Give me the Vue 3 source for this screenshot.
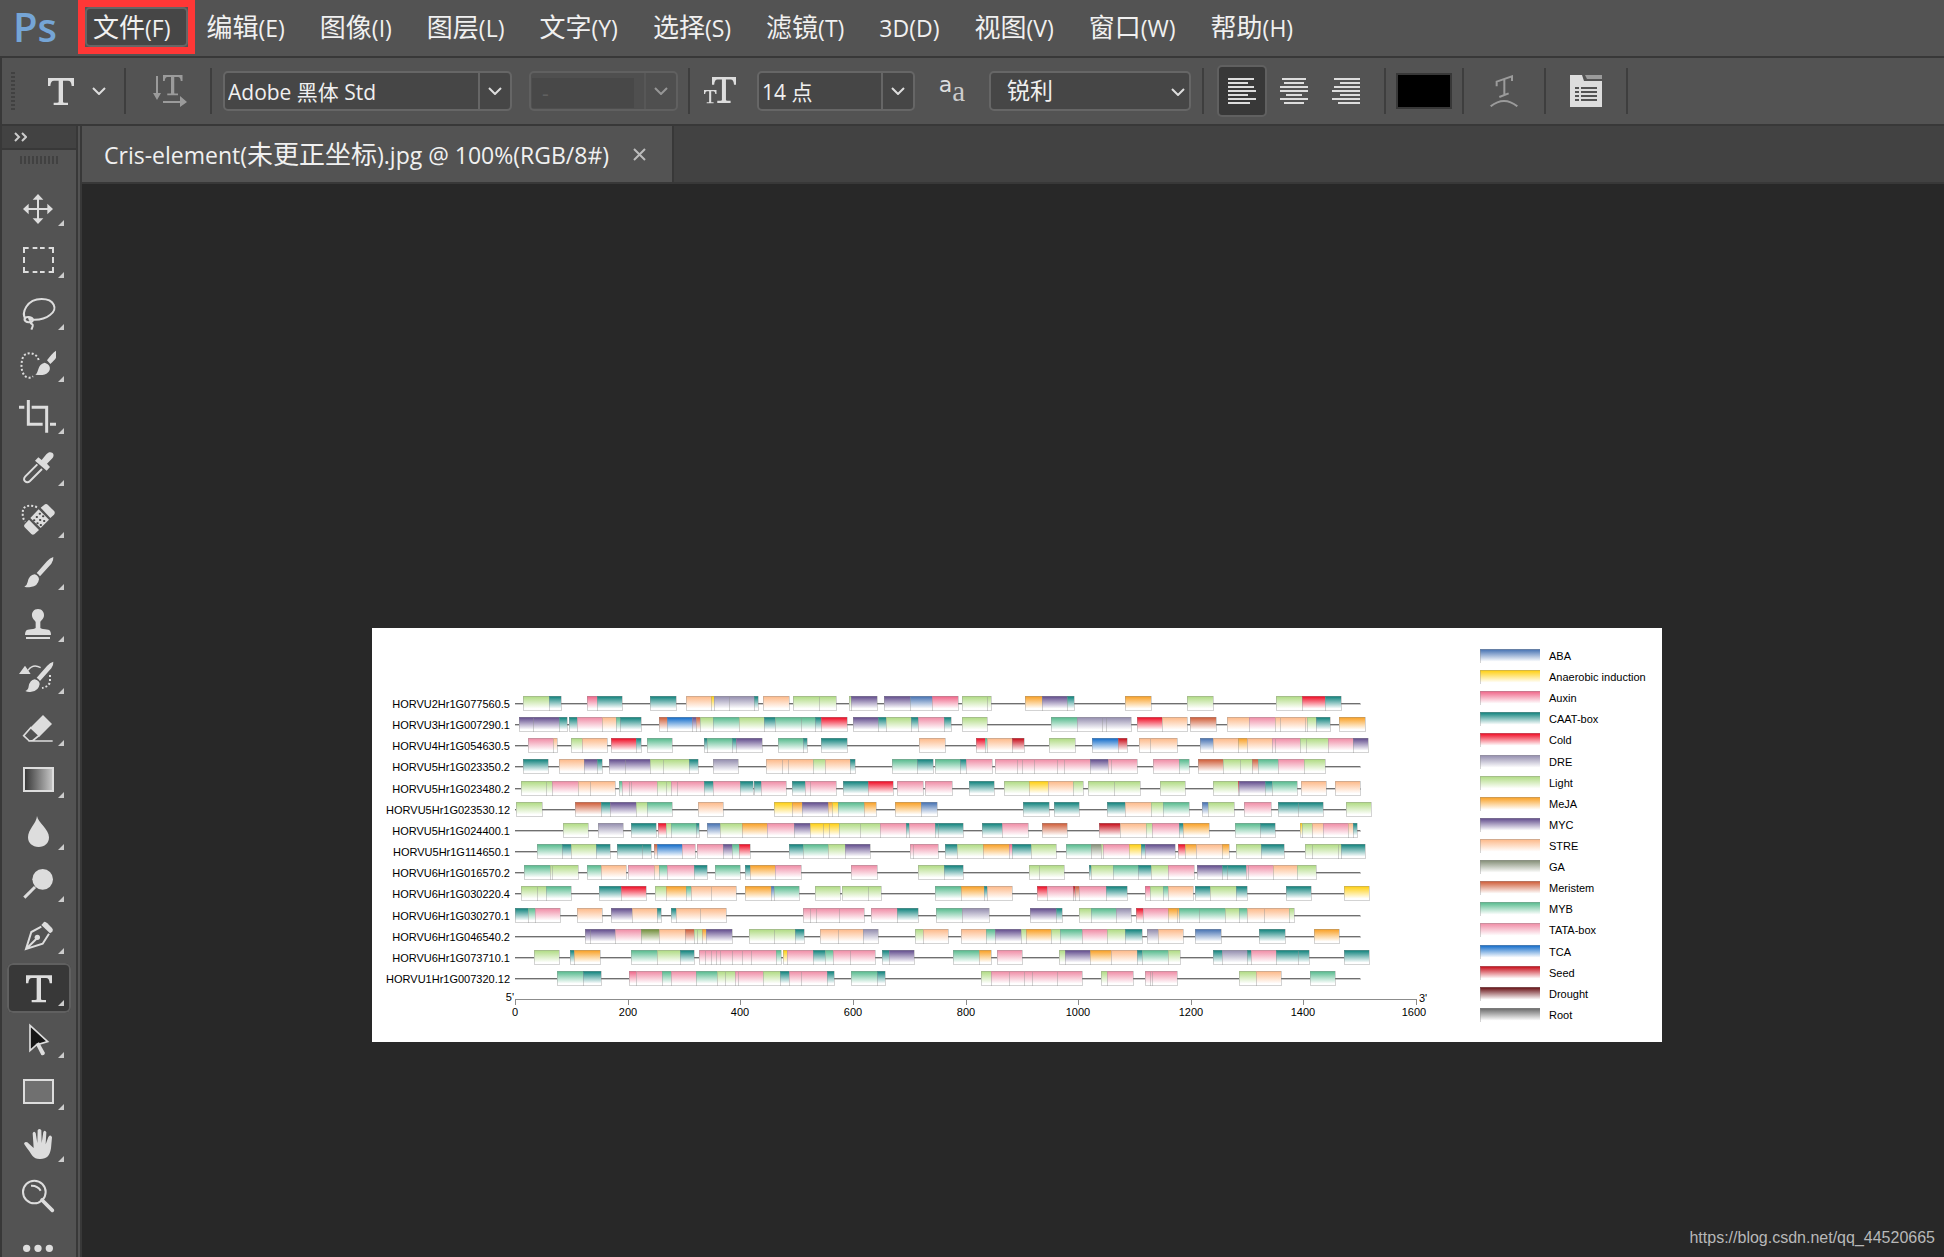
<script setup>
const menus = [
  { name: '文件', key: '(F)', open: true },
  { name: '编辑', key: '(E)' },
  { name: '图像', key: '(I)' },
  { name: '图层', key: '(L)' },
  { name: '文字', key: '(Y)' },
  { name: '选择', key: '(S)' },
  { name: '滤镜', key: '(T)' },
  { name: '', key: '3D(D)' },
  { name: '视图', key: '(V)' },
  { name: '窗口', key: '(W)' },
  { name: '帮助', key: '(H)' },
]

const aligns = [
  { label: '左对齐', anchor: 0, active: true, widths: [26, 20, 26, 28, 20, 28, 22] },
  { label: '居中对齐', anchor: 0.5, widths: [24, 20, 28, 28, 16, 28, 20] },
  { label: '右对齐', anchor: 1, widths: [26, 20, 26, 28, 20, 28, 22] },
]

const serifT = 'M78 37H156V61H149Q148 45 138 45H123V109Q123 111 128 111H138V118H95V111H105Q110 111 110 109V45H96Q86 45 85 61H78Z'

const brush = 'M160 30Q150 33 141 43L110 78Q116 82 120 88L154 50Q161 40 160 30Z M104 82Q116 86 117 97Q114 118 92 120Q82 122 73 119Q81 116 83 105Q87 84 104 82Z'

// f: filled outlines, s: stroked outlines, d: dotted outlines
const tools = [
  { name: '移动工具', f: 'M114 33L130 50H98ZM114 123L130 106H98ZM69 78L86 62V94ZM159 78L142 62V94Z', s: 'M114 45V111M80 78H148' },
  { name: '矩形选框工具', s: 'M72 54V39H86M98 39H112M120 39H134M146 39H159V54M159 66V84M159 96V111H146M134 111H120M112 111H98M86 111H72V96M72 84V66' },
  { name: '套索工具', s: 'M77 97C63 78 80 36 125 36C163 36 175 66 150 84C134 97 110 100 86 97M73 96C76 87 98 88 99 99C97 109 75 108 73 96M86 92C94 99 85 106 98 113C100 117 97 121 94 128' },
  { name: '快速选择工具', f: 'M168 35Q156 43 141 64L151 75Q165 62 168 56ZM134 71C149 75 154 88 146 98C136 110 120 108 106 107C117 101 111 76 134 71Z', d: 'M116 63C108 37 76 38 69 54C62 73 63 96 73 109C80 118 92 118 99 112' },
  { name: '裁剪工具', s: 'M57 49H73M85 27V100H128M95 49H140V125M150 100H168', w: 9 },
  { name: '吸管工具', f: 'M105 53L115 43L125 51L139 34C150 20 169 31 157 46L141 62L150 72L140 83Z', s: 'M112 64L76 100C65 112 80 123 90 114L126 78' },
  { name: '污点修复画笔工具', f: 'M122 38L135 28Q140 26 144 30L163 49Q166 54 162 59L151 69ZM116 43L147 74L122 99L91 69ZM87 74L117 105L103 118Q98 121 94 117L74 97Q70 92 75 87Z', k: 'M119 56h1M129 64h1M110 66h1M120 75h1M132 78h1M102 76h1M112 85h1M122 90h1', d: 'M111 37C94 29 75 31 69 43C68 55 66 70 76 80' },
  { name: '画笔工具', f: brush },
  { name: '仿制图章工具', f: 'M114 30C127 30 133 41 132 50C131 61 121 64 121 70V87Q124 90 145 92Q153 94 153 108H75Q75 94 83 92Q104 90 107 87V70C107 64 97 61 96 50C95 41 101 30 114 30ZM78 114H150V120H78Z' },
  { name: '历史记录画笔工具', f: 'M160 32Q150 35 141 45L110 80Q116 84 120 90L154 52Q161 42 160 32ZM104 85Q118 88 119 99Q116 120 94 122Q84 124 76 120Q85 117 86 106Q89 88 104 85ZM75 44L92 69H57Z', s: 'M84 58Q99 37 122 50', d: 'M150 72V94Q144 108 126 111', w: 4 },
  { name: '橡皮擦工具', f: 'M129 36L156 63L118 101L90 75Z', s: 'M94 72L71 98L88 114L98 113L119 96M85 114H158', w: 5 },
  { name: '渐变工具', box: 'url(#tool-ramp)' },
  { name: '模糊工具', f: 'M111 27C114 47 147 66 147 91C147 109 134 120 116 120C97 120 84 108 84 91C84 67 110 48 111 27Z' },
  { name: '减淡工具', f: 'M159 61A31 31 0 1 1 97 61A31 31 0 1 1 159 61Z', s: 'M105 84L73 116', w: 9 },
  { name: '钢笔工具', f: 'M124 42L132 33Q136 31 142 37L156 51Q161 56 157 62L150 67Z', s: 'M124 47L94 63L78 114L128 98L147 68M79 113L111 82', dot: [112, 79, 8] },
  { name: '横排文字工具', f: serifT, active: true },
  { name: '路径选择工具', f: 'M107 87L117 82L135 114Q133 123 124 120Z', cursor: true },
  { name: '矩形工具', box: '#707070' },
  { name: '抓手工具', f: 'M72 74Q74 66 82 70L101 87L98 43Q101 34 107 42L112 72L113 34Q118 26 124 34L125 72L130 39Q135 31 139 40L137 76L145 54Q152 45 156 55L153 88C149 112 141 119 121 120C99 121 95 107 88 97Q82 89 72 74Z' },
  { name: '缩放工具', s: 'M137 63A34 34 0 1 1 69 63A34 34 0 1 1 137 63M93 44Q113 43 122 59', handle: 'M126 87L157 118', single: true },
  { name: '编辑工具栏', f: 'M91 76A11 11 0 1 1 69 76A11 11 0 1 1 91 76ZM125 76A11 11 0 1 1 103 76A11 11 0 1 1 125 76ZM159 76A11 11 0 1 1 137 76A11 11 0 1 1 159 76Z', single: true },
]

const elements = [
  { id: 'A', name: 'ABA', color: '#4a75b4' },
  { id: 'N', name: 'Anaerobic induction', color: '#ffd015' },
  { id: 'X', name: 'Auxin', color: '#f06a8c' },
  { id: 'C', name: 'CAAT-box', color: '#14857f' },
  { id: 'K', name: 'Cold', color: '#f01028' },
  { id: 'D', name: 'DRE', color: '#9690b0' },
  { id: 'L', name: 'Light', color: '#b2dc86' },
  { id: 'J', name: 'MeJA', color: '#f9a229' },
  { id: 'Y', name: 'MYC', color: '#65508f' },
  { id: 'S', name: 'STRE', color: '#fdbb8c' },
  { id: 'G', name: 'GA', color: '#87917a' },
  { id: 'R', name: 'Meristem', color: '#d0603c' },
  { id: 'B', name: 'MYB', color: '#5abc90' },
  { id: 'T', name: 'TATA-box', color: '#f08fa8' },
  { id: 'W', name: 'TCA', color: '#176fcb' },
  { id: 'E', name: 'Seed', color: '#c8101c' },
  { id: 'O', name: 'Drought', color: '#6a1418' },
  { id: 'Q', name: 'Root', color: '#6c6c6c' },
]
const fills = [...elements, { id: 'V', color: '#75903f' }]

// Each track lists positions and the element that starts there; "_" is a gap.
const tracks = [
  ['HORVU2Hr1G077560.5', '24L102C139_216X247C322_406C483_513S589N598D642D717C729_744S821_835L912L964_1003L1009Y1087_1107Y1184A1252X1330_1341L1416L1429_1530J1581Y1657C1677_1830J1909_2017L2095_2283L2360K2431C2479_'],
  ['HORVU3Hr1G007290.1', '12Y54Y132C157_162C186T261S303B316C379_433R455W531Y543R555L594B672L747C781B858B900C919K996_1014Y1089C1113L1189C1210T1287C1309_1341L1417_1608B1685D1761D1773D1849_1867K1941S2017_2026R2103_2136S2201T2280S2295S2370S2376L2402C2446_2472J2551_'],
  ['HORVU4Hr1G054630.5', '39T115S127_168L201S277_288K364C378_396B472_567C576B651C663Y742_788B864C877_919C996_1213S1290_1382K1411B1416S1491E1527_1603L1680_1731W1809E1836_1872S1905S1986_2055A2094S2169J2196S2271T2280T2355L2373L2439T2514Y2560_'],
  ['HORVU5Hr1G023350.2', '24C100_132S207Y246C261_282Y331Y406L445L522C549_594D670_754S801S819S895L930S1006C1021_1131B1206C1253_1260B1335C1354T1431_1439T1507T1521T1556T1625T1648T1725Y1780T1788T1867_1915T1992B2023_2049R2125L2175L2210R2229B2289T2367L2431_'],
  ['HORVU5Hr1G023480.2', '18L94L111T189S225S301_313B321T342T348T426L453L468T487T567C595T675C714_717C738T814_830C870T885T964_984C1059K1135_1146T1224_1231T1312_1362C1438_1467L1543N1599S1675L1704_1720L1797L1876_1935L2011_2094L2169K2172Y2250C2271B2347_2358S2434_2460S2536_'],
  ['HORVU5Hr1G023530.12', '3L82_180R258C285Y363L396B472_549S625_777N831J862Y939J951N969B1047J1084_1140J1218A1267_1525C1603_1617C1693_1776C1831S1908L1944B2023_2061A2079L2157_2187T2268_2289C2350C2425_2493L2569_'],
  ['HORVU5Hr1G024400.1', '144L220_249D325_348C424_428K453L468B544C553_576A615L681J757T838Y885N925N942N972L1035L1096T1173C1182T1260C1269C1345_1401C1462T1540_1581R1657_1752E1816S1893L1912T1993C2004J2083_2160B2235C2280_2355N2361L2391S2424T2500S2515C2527_'],
  ['HORVU5Hr1G114650.1', '66B141C168L244C285_306C381C409_417R426W502T540_545T624Y650B672K706_822C864B940L990Y1066_1185T1195T1269_1290C1326L1404J1483X1490C1549L1624_1653B1728G1759L1765T1842N1878C1889Y1981_1989K2010J2043S2121J2143_2163L2238C2308_2370L2391L2470L2477C2551_'],
  ['HORVU6Hr1G016570.2', '27B105L111L189_216B258S334_340T417S432B456T537C577_600B676_691C705J781T859_1009T1087_1210L1287C1345_1542L1572L1648_1723C1728L1794B1869C1908L1959T2038_2046Y2121C2136C2192T2199T2274S2346L2404_'],
  ['HORVU6Hr1G030220.4', '18L66L93B169_253C318K394_420L453J513B528S588S664_690J768A776B853_900L976_982L1059L1099_1260B1338J1407C1416S1492_1565K1597T1675E1681R1692T1773C1837_1890X1906L1944B1959S2035_2041C2084L2163C2196_2313C2389_2487N2563_'],
  ['HORVU6Hr1G030270.1', '0C39B61T136_186S262_288Y351S427C439_469C483S555S633_864T885T904T972T1048_1069T1146C1210_1264B1341D1423_1546Y1623C1642_1692L1728B1804D1848_1864K1884T1959J1987J1992B2052B2131L2172B2196S2247S2323L2338_'],
  ['HORVU6Hr1G046540.2', '210Y225Y301T378V433S510R538L546L561J573Y650_702L777L840C868_915S969S1044D1089_1201L1224S1300_1338S1414B1441Y1518L1533J1609L1635B1701T1777L1830C1881_1896D1929S2005_2041A2119_2232C2311_2397J2473_'],
  ['HORVU6Hr1G073710.1', '57L133_165C177J255_348B426L495C538_553T571T588T604T616T651T681T708T783B799_805N817T895C931B954T1005T1081_1101C1122Y1198_1314B1392J1429_1446T1522_1633L1649Y1725J1789S1866C1882B1959L1996_2094C2121D2196C2208T2284C2350C2383_2487C2563_'],
  ['HORVU1Hr1G007320.12', '126B204C259_343X364T441B468T543B607L630L660T670T745L795C822T858T936C958_1009B1086C1111_1399L1429T1482T1527T1552T1625T1702_1758L1776T1854_1890T1906T1911T1987_2172L2223S2299_2385B2461_'],
].map(([name, code], row) => {
  const marks = [...code.matchAll(/(\d+)([A-Z_])/g)].map((m) => [Math.round(m[1] / 3), m[2]])
  const blocks = marks
    .slice(0, -1)
    .map(([x, id], i) => ({ x, id, w: marks[i + 1][0] - x }))
    .filter((b) => b.id !== '_')
  return { name, blocks, y: 68 + Math.round((row * 275) / 13) }
})

const ticks = [0, 200, 400, 600, 800, 1000, 1200, 1400, 1600].map((bp) => ({
  bp,
  x: Math.round((bp * 901) / 1600),
}))
</script>

<template>
  <div class="app">
    <nav class="menubar">
      <span class="logo">Ps</span>
      <div v-for="m in menus" :key="m.key" class="menu-item">
        <button type="button" :class="{ open: m.open }"><span class="cn">{{ m.name }}</span>{{ m.key }}</button>
        <span v-if="m.open" class="highlight"></span>
      </div>
    </nav>

    <div class="options">
      <span class="grip-v"></span>
      <button type="button" class="preset" aria-label="文字工具预设">
        <svg width="26" height="27" viewBox="78 37 78 81"><path :d="serifT" fill="#ddd" /></svg>
        <svg width="14" height="8" viewBox="0 0 14 8"><path d="M1 1L7 7L13 1" class="chev" /></svg>
      </button>
      <span class="sep"></span>
      <button type="button" class="orient" aria-label="切换文本取向">
        <svg width="36" height="32" viewBox="0 0 36 32" fill="#9b9b9b">
          <path d="M4 1H6V18H9L5 25L1 18H4ZM11 26H28V21L35 27L28 32V28H11Z" />
          <path transform="translate(11 0) scale(.25 .25) translate(-78 -37)" :d="serifT" />
        </svg>
      </button>
      <span class="sep"></span>
      <div class="combo font">
        <input type="text" aria-label="字体" value="Adobe 黑体 Std" />
        <button type="button" aria-label="字体列表"><svg width="14" height="8" viewBox="0 0 14 8"><path d="M1 1L7 7L13 1" class="chev" /></svg></button>
      </div>
      <div class="combo style">
        <input type="text" aria-label="字体样式" value="-" disabled />
        <button type="button" aria-label="样式列表" disabled><svg width="14" height="8" viewBox="0 0 14 8"><path d="M1 1L7 7L13 1" class="chev" /></svg></button>
      </div>
      <span class="sep"></span>
      <label for="size" class="size-icon" aria-label="字体大小">
        <svg width="32" height="27" viewBox="0 0 32 27" fill="#ddd">
          <path transform="translate(8 0) scale(.31 .32) translate(-78 -37)" :d="serifT" />
          <path transform="translate(0 13) scale(.16 .165) translate(-78 -37)" :d="serifT" />
        </svg>
      </label>
      <div class="combo size">
        <input id="size" type="text" value="14 点" />
        <button type="button" aria-label="大小列表"><svg width="14" height="8" viewBox="0 0 14 8"><path d="M1 1L7 7L13 1" class="chev" /></svg></button>
      </div>
      <label for="aa" class="aa"><b>a</b><span>a</span></label>
      <div class="select-wrap">
        <select id="aa"><option>锐利</option></select>
        <svg width="14" height="8" viewBox="0 0 14 8"><path d="M1 1L7 7L13 1" class="chev" /></svg>
      </div>
      <span class="sep"></span>
      <div class="aligns">
        <button v-for="a in aligns" :key="a.label" type="button" :aria-label="a.label" :class="{ active: a.active }">
          <svg width="28" height="26" viewBox="0 0 28 26" fill="#ddd">
            <rect v-for="(w, i) in a.widths" :key="i" :x="(28 - w) * a.anchor" :y="i * 4" :width="w" height="2" />
          </svg>
        </button>
      </div>
      <span class="sep"></span>
      <button type="button" class="swatch" aria-label="文本颜色"></button>
      <span class="sep"></span>
      <button type="button" class="wide" aria-label="创建文字变形">
        <svg width="28" height="32" viewBox="0 0 84 96" fill="none" stroke="#9b9b9b" stroke-width="6">
          <path d="M20 34V20L66 4V18M43 12V60M28 66L56 55" /><path d="M2 94Q42 62 82 94" />
        </svg>
      </button>
      <span class="sep"></span>
      <button type="button" class="wide" aria-label="切换字符和段落面板">
        <svg width="32" height="32" viewBox="0 0 32 32">
          <path d="M15 0H32V4H17Z" fill="#9b9b9b" /><path d="M0 0H12L14 6H32V32H0Z" fill="#ddd" />
          <path d="M5 13H9M11 13H27M5 17H9M11 17H27M5 21H9M11 21H27M5 25H9M11 25H27" stroke="#535353" stroke-width="2" />
        </svg>
      </button>
      <span class="sep"></span>
    </div>

    <div class="workspace">
      <aside class="toolbar">
        <button type="button" class="expand" aria-label="展开面板">
          <svg width="13" height="10" viewBox="0 0 13 10"><path d="M1 1L5 5L1 9M8 1L12 5L8 9" fill="none" stroke="#ccc" stroke-width="2" /></svg>
        </button>
        <div class="grip-h"></div>
        <button v-for="t in tools" :key="t.name" type="button" class="tool" :class="{ active: t.active }" :aria-label="t.name">
          <svg width="64" height="50" viewBox="21 0 192 150">
            <defs>
              <linearGradient id="tool-ramp"><stop offset="0" stop-color="#333" /><stop offset="1" stop-color="#c8c8c8" /></linearGradient>
            </defs>
            <rect v-if="t.box" x="72" y="39" width="87" height="69" :fill="t.box" stroke="#ddd" stroke-width="6" />
            <path v-if="t.cursor" d="M90 31V107L109 90L143 80Z" fill="#161616" stroke="#ddd" stroke-width="5" />
            <path v-if="t.f" :d="t.f" fill="#ddd" />
            <path v-if="t.s" :d="t.s" fill="none" stroke="#ddd" :stroke-width="t.w || 6" />
            <path v-if="t.d" :d="t.d" fill="none" stroke="#ddd" stroke-width="6" stroke-dasharray="6 6" />
            <path v-if="t.k" :d="t.k" stroke="#484848" stroke-width="6" stroke-linecap="round" />
            <path v-if="t.handle" :d="t.handle" stroke="#ddd" stroke-width="11" stroke-linecap="round" />
            <circle v-if="t.dot" :cx="t.dot[0]" :cy="t.dot[1]" :r="t.dot[2]" fill="#ddd" />
            <path v-if="!t.single" d="M192 111V129H174Z" fill="#ccc" />
          </svg>
        </button>
      </aside>

      <main class="documents">
        <div class="tabs">
          <div class="tab">
            <span>Cris-element(<span class="cn">未更正坐标</span>).jpg @ 100%(RGB/8#)</span>
            <button type="button" aria-label="关闭">
              <svg width="13" height="13" viewBox="0 0 13 13"><path d="M1 1L12 12M12 1L1 12" stroke="#bbb" stroke-width="2" /></svg>
            </button>
          </div>
        </div>
        <div class="canvas">
          <section class="sheet">
            <svg class="plot" width="1107" height="414">
              <defs>
                <linearGradient v-for="f in fills" :id="'el-' + f.id" :key="f.id" x1="0" y1="0" x2="0" y2="1">
                  <stop offset="0.05" :stop-color="f.color" /><stop offset="0.9" stop-color="#fff" />
                </linearGradient>
              </defs>
              <g v-for="t in tracks" :key="t.name" :transform="`translate(143 ${t.y})`">
                <text x="-5" y="12" text-anchor="end">{{ t.name }}</text>
                <rect x="0" y="7" width="845" height="1" class="strand" />
                <g v-for="b in t.blocks" :key="b.x">
                  <rect :x="b.x" y="0" :width="b.w" height="14" fill="#fff" />
                  <rect :x="b.x" y="0" :width="b.w" height="14" :fill="`url(#el-${b.id})`" class="block" />
                </g>
              </g>
              <g transform="translate(143 371)">
                <path class="axis" d="M0 0H901" />
                <g v-for="t in ticks" :key="t.bp">
                  <path class="axis" :d="`M${t.x} 0V6`" />
                  <text :x="t.bp === 1600 ? t.x - 2 : t.x" y="17" text-anchor="middle">{{ t.bp }}</text>
                </g>
                <text x="-1" y="2" text-anchor="end">5'</text>
                <text x="904" y="3">3'</text>
              </g>
            </svg>
            <ul class="legend">
              <li v-for="e in elements" :key="e.id">
                <svg width="61" height="15"><rect x="1" y="1" width="60" height="14" :fill="`url(#el-${e.id})`" class="block" /></svg>
                <span>{{ e.name }}</span>
              </li>
            </ul>
          </section>
          <span class="watermark">https://blog.csdn.net/qq_44520665</span>
        </div>
      </main>
    </div>
  </div>
</template>

<style>
body { background: #282828; }
</style>

<style scoped>
* { box-sizing: border-box; }
.app {
  display: flex; flex-direction: column; height: 100vh; overflow: hidden;
  background: #535353; color: #f0f0f0;
  font-family: "Open Sans", "Noto Sans CJK SC", sans-serif; font-size: 23px; line-height: 32px;
}
button { padding: 0; border: 0; background: none; color: inherit; font: inherit; }
svg { display: block; flex: none; }
.cn { font-size: 26px; }
.chev { fill: none; stroke: #ddd; stroke-width: 2; }

.menubar { display: flex; flex: none; align-items: center; gap: 1px; height: 58px; padding-bottom: 2px; border-bottom: 2px solid #383838; }
.logo { width: 84px; padding-left: 13px; color: #75a5d6; font-size: 40px; font-weight: 600; }
.menu-item { position: relative; }
.menu-item button { height: 40px; padding: 0 15px; border: 2px solid transparent; border-radius: 5px; white-space: nowrap; }
.menu-item button.open { padding: 0 16px 0 6px; background: #464646; border-color: #666; }
.highlight { position: absolute; inset: -7px; border: 7px solid #ff3736; }

.options {
  display: flex; flex: none; align-items: center; height: 68px; padding-left: 9px;
  border-left: 2px solid #383838; border-bottom: 2px solid #383838;
}
.options > * { flex: none; }
.options > button, .size-icon { display: flex; align-items: center; justify-content: center; height: 50px; }
.sep { width: 2px; height: 46px; background: #3e3e3e; }
.grip-v { width: 4px; height: 38px; background: repeating-linear-gradient(#414141 0 2px, transparent 2px 4px); }
.preset { width: 109px; gap: 18px; padding-left: 14px; }
.options .orient { width: 84px; padding-left: 4px; }
.combo { display: flex; height: 40px; border: 2px solid #666; border-radius: 5px; background: #464646; }
.combo input {
  flex: 1; min-width: 0; padding: 0 3px; border: 0; background: none; color: #f0f0f0;
  font-family: inherit; font-size: 21px;
}
.combo button { display: flex; align-items: center; justify-content: center; width: 32px; border-left: 2px solid #666; }
.font { width: 289px; margin-left: 11px; }
.style { width: 149px; margin: 0 10px 0 17px; border-color: #606060; background: #4f4f4f; }
.style input { margin: 5px 10px 1px 1px; padding-left: 10px; background: #484848; color: #606060; }
.style button { border-color: #606060; opacity: 0.5; }
.size-icon { width: 67px; padding: 0 3px 2px 0; justify-content: flex-end; }
.options .size-icon { padding-right: 21px; }
.size { width: 158px; }
.aa { display: flex; align-items: flex-start; justify-content: center; width: 74px; font-family: "Liberation Serif", serif; font-size: 29px; color: #ccc; }
.aa b { font-family: "DejaVu Sans", sans-serif; font-size: 22px; font-weight: 400; line-height: 20px; color: #ddd; }
.select-wrap { position: relative; width: 202px; margin-right: 11px; }
.select-wrap select {
  width: 100%; height: 40px; padding: 0 16px 2px; appearance: none; border: 2px solid #666; border-radius: 5px;
  background: #464646; color: #f0f0f0; font-family: inherit; font-size: 23px;
}
.select-wrap svg { position: absolute; right: 6px; top: 17px; pointer-events: none; }
.aligns { display: flex; gap: 2px; margin: 0 13px; }
.aligns button { display: flex; align-items: center; justify-content: center; width: 50px; height: 52px; border: 2px solid transparent; border-radius: 5px; }
.aligns button.active { background: #383838; border-color: #606060; }
.options .swatch { width: 56px; height: 36px; margin: 0 10px; border: 2px solid #383838; background: #000; }
.wide { width: 80px; }

.workspace { display: flex; flex: 1; min-height: 0; }
.toolbar {
  display: flex; flex: none; flex-direction: column; align-items: center; gap: 2px; width: 78px; overflow: hidden;
  border-left: 2px solid #383838; border-right: 2px solid #383838;
}
.expand { flex: none; align-self: stretch; height: 24px; padding-left: 12px; background: #424242; border-bottom: 2px solid #383838; }
.grip-h { flex: none; width: 38px; height: 8px; margin: 4px 0 17px; background: repeating-linear-gradient(90deg, #414141 0 2px, transparent 2px 4px); }
.tool { flex: none; width: 64px; height: 50px; border-radius: 6px; }
.tool.active { background: #383838; box-shadow: inset 0 0 0 2px #606060; }

.documents { display: flex; flex: 1; flex-direction: column; min-width: 0; margin-left: 2px; border-left: 2px solid #383838; }
.tabs { display: flex; flex: none; height: 58px; background: #424242; border-bottom: 2px solid #383838; }
.tab { display: flex; align-items: center; gap: 24px; padding: 1px 26px 0 22px; background: #535353; border-right: 2px solid #383838; white-space: nowrap; }
.canvas { position: relative; flex: 1; padding: 444px 0 0 8px; background: #282828; }
.sheet { display: flex; width: 1290px; height: 414px; margin: 0 auto; background: #fff; color: #000; font-family: "Liberation Sans", sans-serif; font-size: 11px; line-height: 16px; }
.plot text { fill: #000; }
.strand { fill: #6f6f6f; stroke: #c8c8c8; stroke-width: 1; paint-order: stroke; shape-rendering: crispEdges; }
.block { stroke: #909090; stroke-opacity: 0.4; stroke-width: 1; shape-rendering: crispEdges; }
.axis { fill: none; stroke: #8c8c8c; stroke-width: 1; shape-rendering: crispEdges; }
.legend { display: flex; flex-direction: column; justify-content: space-between; height: 374px; margin: 20px 0 0; padding: 0; list-style: none; }
.legend li { display: flex; gap: 9px; height: 15px; white-space: nowrap; }
.watermark { position: absolute; right: 9px; bottom: 8px; font-family: "Liberation Sans", sans-serif; font-size: 16px; line-height: 22px; color: #b8b8b8; }
</style>
